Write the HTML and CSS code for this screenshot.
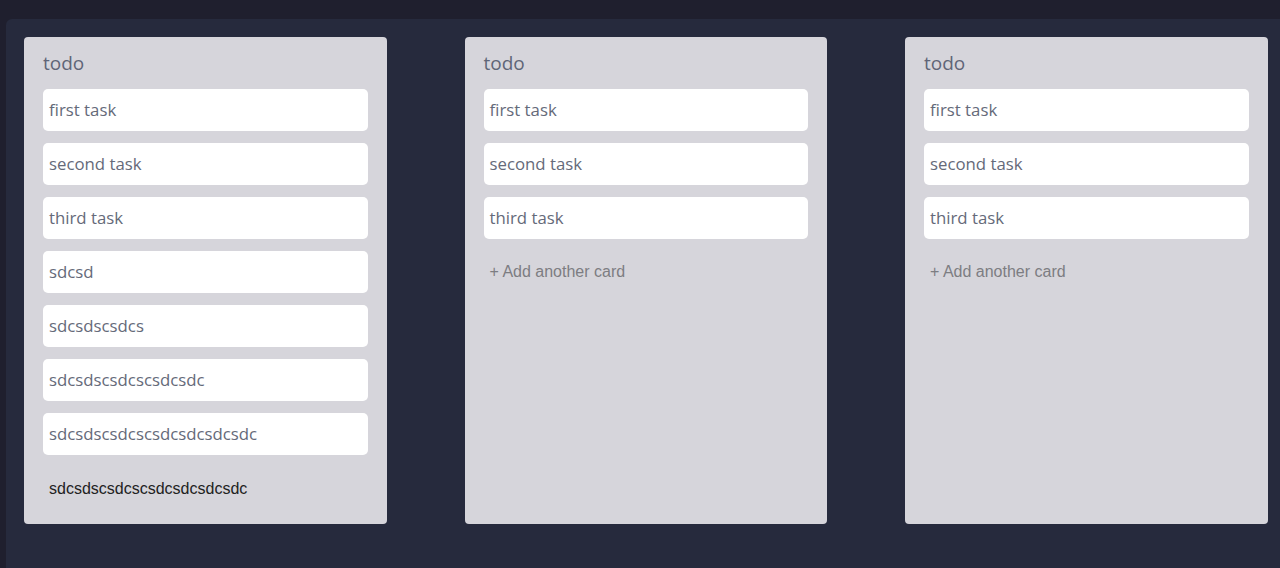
FILE: index.html
```html
<!DOCTYPE html>
<html>
<head>
<meta http-equiv="Content-Type" content="text/html; charset=utf-8"/>
<title>board</title>
<link rel="stylesheet" href="styles.css">
</head>
<body>
<div class="board">
  <div class="list">
    <div class="list-title">todo</div>
    <div class="card">first task</div>
    <div class="card">second task</div>
    <div class="card">third task</div>
    <div class="card">sdcsd</div>
    <div class="card">sdcsdscsdcs</div>
    <div class="card">sdcsdscsdcscsdcsdc</div>
    <div class="card">sdcsdscsdcscsdcsdcsdcsdc</div>
    <div class="composer">sdcsdscsdcscsdcsdcsdcsdc</div>
  </div>
  <div class="list">
    <div class="list-title">todo</div>
    <div class="card">first task</div>
    <div class="card">second task</div>
    <div class="card">third task</div>
    <div class="add-card">+ Add another card</div>
  </div>
  <div class="list">
    <div class="list-title">todo</div>
    <div class="card">first task</div>
    <div class="card">second task</div>
    <div class="card">third task</div>
    <div class="add-card">+ Add another card</div>
  </div>
</div>
</body>
</html>
```

FILE: styles.css
```css
html, body {
  height: 100%;
}

body {
  margin: 0;
  background-color: #1f1f2e;
  font-family: "Open Sans", "Noto Sans", sans-serif;
  overflow: hidden;
}

.board {
  box-sizing: border-box;
  height: calc(100% - 19px);
  margin: 19px 0 0 6px;
  padding: 18px 0 0 18px;
  background-color: #262a3d;
  border-top-left-radius: 6px;
  display: flex;
  align-items: flex-start;
  gap: 78px;
}

.list {
  box-sizing: border-box;
  width: 362.5px;
  height: 487px;
  padding: 13px 19px;
  background-color: #d6d5db;
  border-radius: 4px;
  display: flex;
  flex-direction: column;
  gap: 12px;
}

.list-title {
  font-size: 19px;
  line-height: 26px;
  margin-bottom: 1px;
  color: #5f6577;
}

.card {
  padding: 7px 6px;
  font-size: 16.8px;
  line-height: 28px;
  color: #656a79;
  background-color: #fff;
  border-radius: 5px;
}

.add-card, .composer {
  padding: 11px 6px 10px;
  font-family: "Liberation Sans", Arial, sans-serif;
  font-size: 16px;
  line-height: 20px;
}

.add-card {
  color: #7d7d82;
}

.composer {
  padding-top: 12px;
  color: #222;
}
```
